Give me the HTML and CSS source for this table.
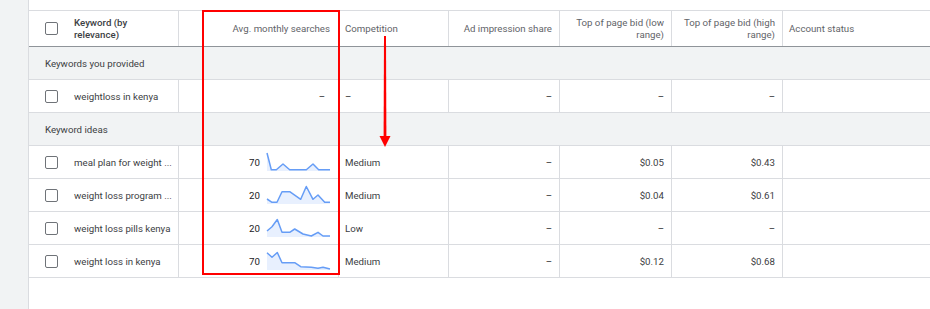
FILE: index.html
```html
<!DOCTYPE html>
<html>
<head>
<meta charset="utf-8">
<link rel="stylesheet" href="styles.css">
</head>
<body>
<div class="page">
  <aside class="rail"></aside>
  <main class="main">
    <div class="table">
      <div class="row head">
        <div class="cell kw"><span class="cb"></span><span class="kw-label">Keyword (by relevance)</span></div>
        <div class="cell num"><span>Avg. monthly searches</span></div>
        <div class="cell left"><span>Competition</span></div>
        <div class="cell num"><span>Ad impression share</span></div>
        <div class="cell num"><span>Top of page bid (low range)</span></div>
        <div class="cell num"><span>Top of page bid (high range)</span></div>
        <div class="cell left last"><span>Account status</span></div>
      </div>

      <div class="group">Keywords you provided</div>

      <div class="row">
        <div class="cell kw"><span class="cb"></span><span class="kw-text">weightloss in kenya</span></div>
        <div class="cell num avg"><span class="dash dash-avg">–</span></div>
        <div class="cell left"><span class="dash">–</span></div>
        <div class="cell num"><span class="dash">–</span></div>
        <div class="cell num"><span class="dash">–</span></div>
        <div class="cell num"><span class="dash">–</span></div>
        <div class="cell last"></div>
      </div>

      <div class="group">Keyword ideas</div>

      <div class="row">
        <div class="cell kw"><span class="cb"></span><span class="kw-text" title="meal plan for weight loss in kenya">meal plan for weight ...</span></div>
        <div class="cell num avg"><span class="val">70</span>
          <svg class="spark" viewBox="0 0 63 18" width="63" height="18"><polygon class="area" points="0,0 4.3,16.7 9.3,16.7 16,11 22.7,16.7 39.3,16.7 46,11 51.7,16.7 63,16.7 63,18 0,18"/><polyline class="line" points="0,0 4.3,16.7 9.3,16.7 16,11 22.7,16.7 39.3,16.7 46,11 51.7,16.7 63,16.7"/></svg>
        </div>
        <div class="cell left"><span>Medium</span></div>
        <div class="cell num"><span class="dash">–</span></div>
        <div class="cell num"><span>$0.05</span></div>
        <div class="cell num"><span>$0.43</span></div>
        <div class="cell last"></div>
      </div>

      <div class="row">
        <div class="cell kw"><span class="cb"></span><span class="kw-text" title="weight loss program in kenya">weight loss program ...</span></div>
        <div class="cell num avg"><span class="val">20</span>
          <svg class="spark" viewBox="0 0 63 18" width="63" height="18"><polygon class="area" points="0,13 5,16.3 10,16.3 15,5.7 22.7,5.7 33.7,13.3 39.3,0.5 46,13.3 51,9 57.7,16.3 63,16.3 63,18 0,18"/><polyline class="line" points="0,13 5,16.3 10,16.3 15,5.7 22.7,5.7 33.7,13.3 39.3,0.5 46,13.3 51,9 57.7,16.3 63,16.3"/></svg>
        </div>
        <div class="cell left"><span>Medium</span></div>
        <div class="cell num"><span class="dash">–</span></div>
        <div class="cell num"><span>$0.04</span></div>
        <div class="cell num"><span>$0.61</span></div>
        <div class="cell last"></div>
      </div>

      <div class="row">
        <div class="cell kw"><span class="cb"></span><span class="kw-text">weight loss pills kenya</span></div>
        <div class="cell num avg"><span class="val">20</span>
          <svg class="spark" viewBox="0 0 63 18" width="63" height="18"><polygon class="area" points="0,12 5,7.7 10.3,0.5 15,13.3 22.7,13.3 27.7,10 36,15 44.3,17 51,13.3 56,17 63,17 63,18 0,18"/><polyline class="line" points="0,12 5,7.7 10.3,0.5 15,13.3 22.7,13.3 27.7,10 36,15 44.3,17 51,13.3 56,17 63,17"/></svg>
        </div>
        <div class="cell left"><span>Low</span></div>
        <div class="cell num"><span class="dash">–</span></div>
        <div class="cell num"><span class="dash">–</span></div>
        <div class="cell num"><span class="dash">–</span></div>
        <div class="cell last"></div>
      </div>

      <div class="row">
        <div class="cell kw"><span class="cb"></span><span class="kw-text">weight loss in kenya</span></div>
        <div class="cell num avg"><span class="val">70</span>
          <svg class="spark" viewBox="0 0 63 18" width="63" height="18"><polygon class="area" points="0,0.7 5,5.3 10.3,0.5 15,10.7 27.7,10.7 33.7,14.7 44.3,15.3 51,16.3 56,15.3 63,17 63,18 0,18"/><polyline class="line" points="0,0.7 5,5.3 10.3,0.5 15,10.7 27.7,10.7 33.7,14.7 44.3,15.3 51,16.3 56,15.3 63,17"/></svg>
        </div>
        <div class="cell left"><span>Medium</span></div>
        <div class="cell num"><span class="dash">–</span></div>
        <div class="cell num"><span>$0.12</span></div>
        <div class="cell num"><span>$0.68</span></div>
        <div class="cell last"></div>
      </div>
    </div>

    <div class="highlight"></div>
    <svg class="arrow" width="14" height="114" viewBox="0 0 14 114">
      <polygon points="6,0 8,0 8.4,101 5.6,101" fill="#ff0000"/>
      <polygon points="1.5,100 12.5,100 7,111" fill="#ff0000"/>
    </svg>
  </main>
</div>
</body>
</html>
```

FILE: styles.css
```css
* { box-sizing: border-box; }
html, body { margin: 0; padding: 0; background: #fff; }
body {
  font-family: Roboto, "Noto Sans", Arial, sans-serif;
  font-size: 9.7px;
  color: #3c4043;
  width: 930px;
  height: 309px;
  overflow: hidden;
}
.page { display: flex; height: 309px; }
.rail {
  width: 29px;
  flex: 0 0 29px;
  background: #f1f3f4;
  border-right: 1px solid #dadce0;
}
.main {
  flex: 1;
  position: relative;
  padding-top: 10px;
  background: #fff;
}
.table { border-top: 1px solid #dadce0; }
.row {
  display: grid;
  grid-template-columns: 150px 160px 110px 111px 112px 111px 1fr;
  height: 33px;
  border-bottom: 1px solid #dadce0;
}
.row.head {
  height: 36px;
  border-bottom: 1px solid #8f9499;
  color: #5f6368;
  line-height: 11.2px;
}
.cell {
  display: flex;
  align-items: center;
  border-right: 1px solid #dadce0;
  padding: 0 7px;
  min-width: 0;
}
.cell.last { border-right: none; }
.cell.num { justify-content: flex-end; text-align: right; }
.cell.left { justify-content: flex-start; padding-left: 6px; }
.cell.avg { padding-right: 8px; }
.head .cell.num:nth-child(2) { padding-right: 8px; }
.cell.kw { padding-left: 16px; padding-right: 3px; }
.cb {
  width: 13px;
  height: 13px;
  flex: 0 0 13px;
  border: 1.4px solid #6f7378;
  border-radius: 2px;
  margin-right: 16px;
}
.kw-label {
  font-weight: 500;
  color: #3c4043;
  max-width: 76px;
}
.kw-text {
  white-space: nowrap;
  color: #3c4043;
}
.dash { color: #202124; }
.dash-avg { margin-right: 5px; }
.val { color: #202124; margin-right: 7px; }
.spark { display: block; overflow: visible; }
.spark .area { fill: #e8f0fe; stroke: none; }
.spark .line { fill: none; stroke: #669df6; stroke-width: 1.5; stroke-linejoin: round; }
.group {
  height: 33px;
  background: #f1f3f4;
  border-bottom: 1px solid #dadce0;
  padding-left: 16px;
  display: flex;
  align-items: center;
  color: #3c4043;
}
.highlight {
  position: absolute;
  left: 173px;
  top: 10px;
  width: 138px;
  height: 265px;
  border: 2px solid #ff0000;
  pointer-events: none;
}
.arrow {
  position: absolute;
  left: 349px;
  top: 36px;
}
```
